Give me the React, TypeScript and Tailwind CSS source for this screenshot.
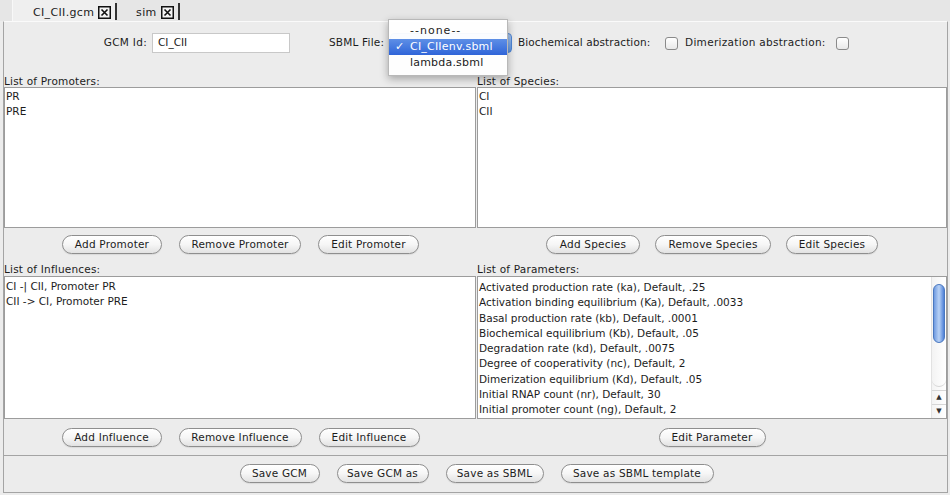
import React from "react";

const font = "font-['DejaVu_Sans',sans-serif]";

function XBox() {
  return (
    <svg width="13" height="13" viewBox="0 0 13 13" className="block">
      <rect x="0.75" y="0.75" width="11.5" height="11.5" fill="#f4f4f4" stroke="#111" strokeWidth="1.5" />
      <path d="M3.5 3.5 L9.5 9.5 M9.5 3.5 L3.5 9.5" stroke="#111" strokeWidth="1.6" />
    </svg>
  );
}

function Btn({ className, children }: { className: string; children: React.ReactNode }) {
  return (
    <div
      className={
        "h-[19px] shrink-0 rounded-full border border-[#8e8e8e] bg-linear-to-b from-white via-[#f6f6f6] to-[#e2e2e2] flex items-center justify-center whitespace-nowrap tracking-[0.2px] shadow-[0_1px_1px_rgba(0,0,0,0.08)] " +
        className
      }
    >
      {children}
    </div>
  );
}

function Check() {
  return (
    <div className="w-[13px] h-[13px] shrink-0 rounded-[3px] border border-[#8a8a8a] bg-linear-to-b from-white to-[#e9e9e9]" />
  );
}

const params = [
  "Activated production rate (ka), Default, .25",
  "Activation binding equilibrium (Ka), Default, .0033",
  "Basal production rate (kb), Default, .0001",
  "Biochemical equilibrium (Kb), Default, .05",
  "Degradation rate (kd), Default, .0075",
  "Degree of cooperativity (nc), Default, 2",
  "Dimerization equilibrium (Kd), Default, .05",
  "Initial RNAP count (nr), Default, 30",
  "Initial promoter count (ng), Default, 2",
];

export default function App() {
  return (
    <div className={"w-[950px] h-[495px] bg-[#ececec] relative overflow-hidden text-[#1c1c1c] text-[10.5px] " + font}>
      {/* Tab bar */}
      <div className="h-[21px] flex bg-[#e6e6e6]">
        <div className="w-[12px]" />
        <div className="w-[103px] h-full bg-[#efefef] border-l border-[#f8f8f8] flex items-center pt-[3px]">
          <span className="ml-[20px] w-[65px] text-[11px] tracking-[0.35px] leading-none whitespace-nowrap">CI_CII.gcm</span>
          <span className="ml-[0px]"><XBox /></span>
        </div>
        <div className="w-[2px] mt-[3px] h-[17px] bg-[#333]" />
        <div className="w-[61px] h-full flex items-center pt-[3px]">
          <span className="ml-[19px] w-[24px] text-[11px] tracking-[0.4px] leading-none">sim</span>
          <span className="ml-[1px]"><XBox /></span>
        </div>
        <div className="w-[2px] mt-[3px] h-[17px] bg-[#333]" />
      </div>

      {/* Main panel */}
      <div className="ml-[3px] w-[945px] h-[472px] border-l border-r border-b border-t border-l-[#a4a4a4] border-r-[#a4a4a4] border-b-[#a4a4a4] border-t-[#fafafa] flex flex-col">
        {/* Header */}
        <div className="h-[53px] shrink-0 flex items-start pt-[11px] pl-[96px]">
          <div className="w-[47px] h-[20px] flex items-center justify-end whitespace-nowrap tracking-[0.3px]">GCM Id:</div>
          <div className="ml-[5px] w-[138px] h-[20px] bg-white border border-[#c8c8c8] flex items-center pl-[5px]">CI_CII</div>
          <div className="ml-[39px] w-[58px] h-[20px] flex items-center whitespace-nowrap tracking-[0.2px]">SBML File:</div>
          <div className="ml-[3px] w-[122px] h-[20px] rounded-[4px] border border-[#4f86d6] bg-linear-to-b from-[#a9c8f2] to-[#5b93e3]" />
          <div className="ml-[6px] w-[132px] h-[20px] flex items-center whitespace-nowrap tracking-[0.1px]">Biochemical abstraction:</div>
          <div className="ml-[15px] h-[20px] flex items-center"><Check /></div>
          <div className="ml-[7px] w-[143px] h-[20px] flex items-center whitespace-nowrap tracking-[0.3px]">Dimerization abstraction:</div>
          <div className="ml-[8px] h-[20px] flex items-center"><Check /></div>
        </div>

        {/* Upper section */}
        <div className="flex gap-[1px]">
          <div className="w-[472px] flex flex-col">
            <div className="h-[12px] leading-[12px] whitespace-nowrap tracking-[0.2px]">List of Promoters:</div>
            <div className="h-[141px] bg-white border border-[#9c9c9c] pt-[1px] pl-[1px] leading-[15px]">
              <div>PR</div>
              <div>PRE</div>
            </div>
            <div className="h-[34px] flex justify-center gap-[17px] pt-[7px] pl-[1px]">
              <Btn className="w-[100px]">Add Promoter</Btn>
              <Btn className="w-[122px]">Remove Promoter</Btn>
              <Btn className="w-[101px]">Edit Promoter</Btn>
            </div>
            <div className="h-[14px] leading-[14px] whitespace-nowrap tracking-[0.2px]">List of Influences:</div>
            <div className="h-[143px] bg-white border border-[#9c9c9c] pt-[2px] pl-[1px] leading-[15px]">
              <div>CI -| CII, Promoter PR</div>
              <div>CII -&gt; CI, Promoter PRE</div>
            </div>
            <div className="h-[36px] flex justify-center gap-[17px] pt-[9px] pl-[1px]">
              <Btn className="w-[100px]">Add Influence</Btn>
              <Btn className="w-[123px]">Remove Influence</Btn>
              <Btn className="w-[101px]">Edit Influence</Btn>
            </div>
          </div>
          <div className="w-[470px] flex flex-col">
            <div className="h-[12px] leading-[12px] whitespace-nowrap tracking-[0.2px]">List of Species:</div>
            <div className="h-[141px] bg-white border border-[#9c9c9c] pt-[1px] pl-[1px] leading-[15px]">
              <div>CI</div>
              <div>CII</div>
            </div>
            <div className="h-[34px] flex justify-center gap-[15px] pt-[7px]">
              <Btn className="w-[94px]">Add Species</Btn>
              <Btn className="w-[116px]">Remove Species</Btn>
              <Btn className="w-[92px]">Edit Species</Btn>
            </div>
            <div className="h-[14px] leading-[14px] whitespace-nowrap tracking-[0.2px]">List of Parameters:</div>
            <div className="h-[143px] bg-white border border-[#9c9c9c] flex">
              <div className="flex-1 pt-[3px] pl-[1px] leading-[15.25px] overflow-hidden whitespace-nowrap">
                {params.map((p) => (
                  <div key={p}>{p}</div>
                ))}
              </div>
              <div className="w-[15px] border-l border-[#e2e2e2] bg-linear-to-r from-[#f3f3f3] to-white flex flex-col">
                <div className="h-[110px] pt-[7px] px-[1px] border-b border-[#d6d6d6] rounded-b-[7px]">
                  <div className="h-[59px] rounded-full border border-[#4a78c0] bg-linear-to-r from-[#6f9ae0] via-[#b9d2f5] to-[#4f80d6]" />
                </div>
                <div className="flex-1" />
                <div className="h-[14px] border-t border-[#d6d6d6] flex items-center justify-center text-[7px] leading-none text-[#333]">▲</div>
                <div className="h-[14px] border-t border-[#d6d6d6] flex items-center justify-center text-[7px] leading-none text-[#333]">▼</div>
              </div>
            </div>
            <div className="h-[36px] flex justify-center pt-[9px]">
              <Btn className="w-[107px]">Edit Parameter</Btn>
            </div>
          </div>
        </div>

        {/* Save row */}
        <div className="flex-1 border-t border-[#a4a4a4] flex justify-center gap-[17px] pt-[8px] pl-[2px]">
          <Btn className="w-[80px]">Save GCM</Btn>
          <Btn className="w-[92px]">Save GCM as</Btn>
          <Btn className="w-[98px]">Save as SBML</Btn>
          <Btn className="w-[153px]">Save as SBML template</Btn>
        </div>
      </div>

      {/* Open combo popup */}
      <div className="absolute left-[388px] top-[19px] w-[120px] h-[57px] bg-white/95 border border-[#b8b8b8] shadow-[0_3px_8px_rgba(0,0,0,0.3)] pt-[4px] text-[11px] tracking-[0.2px]">
        <div className="h-[15px] flex items-center pl-[21px] tracking-[1px]">--none--</div>
        <div className="h-[16px] flex items-center bg-linear-to-b from-[#5e8fe6] to-[#2f64d8] text-white">
          <span className="w-[21px] pl-[6px]">✓</span>
          <span>CI_CIIenv.sbml</span>
        </div>
        <div className="h-[16px] flex items-center pl-[21px]">lambda.sbml</div>
      </div>
    </div>
  );
}
